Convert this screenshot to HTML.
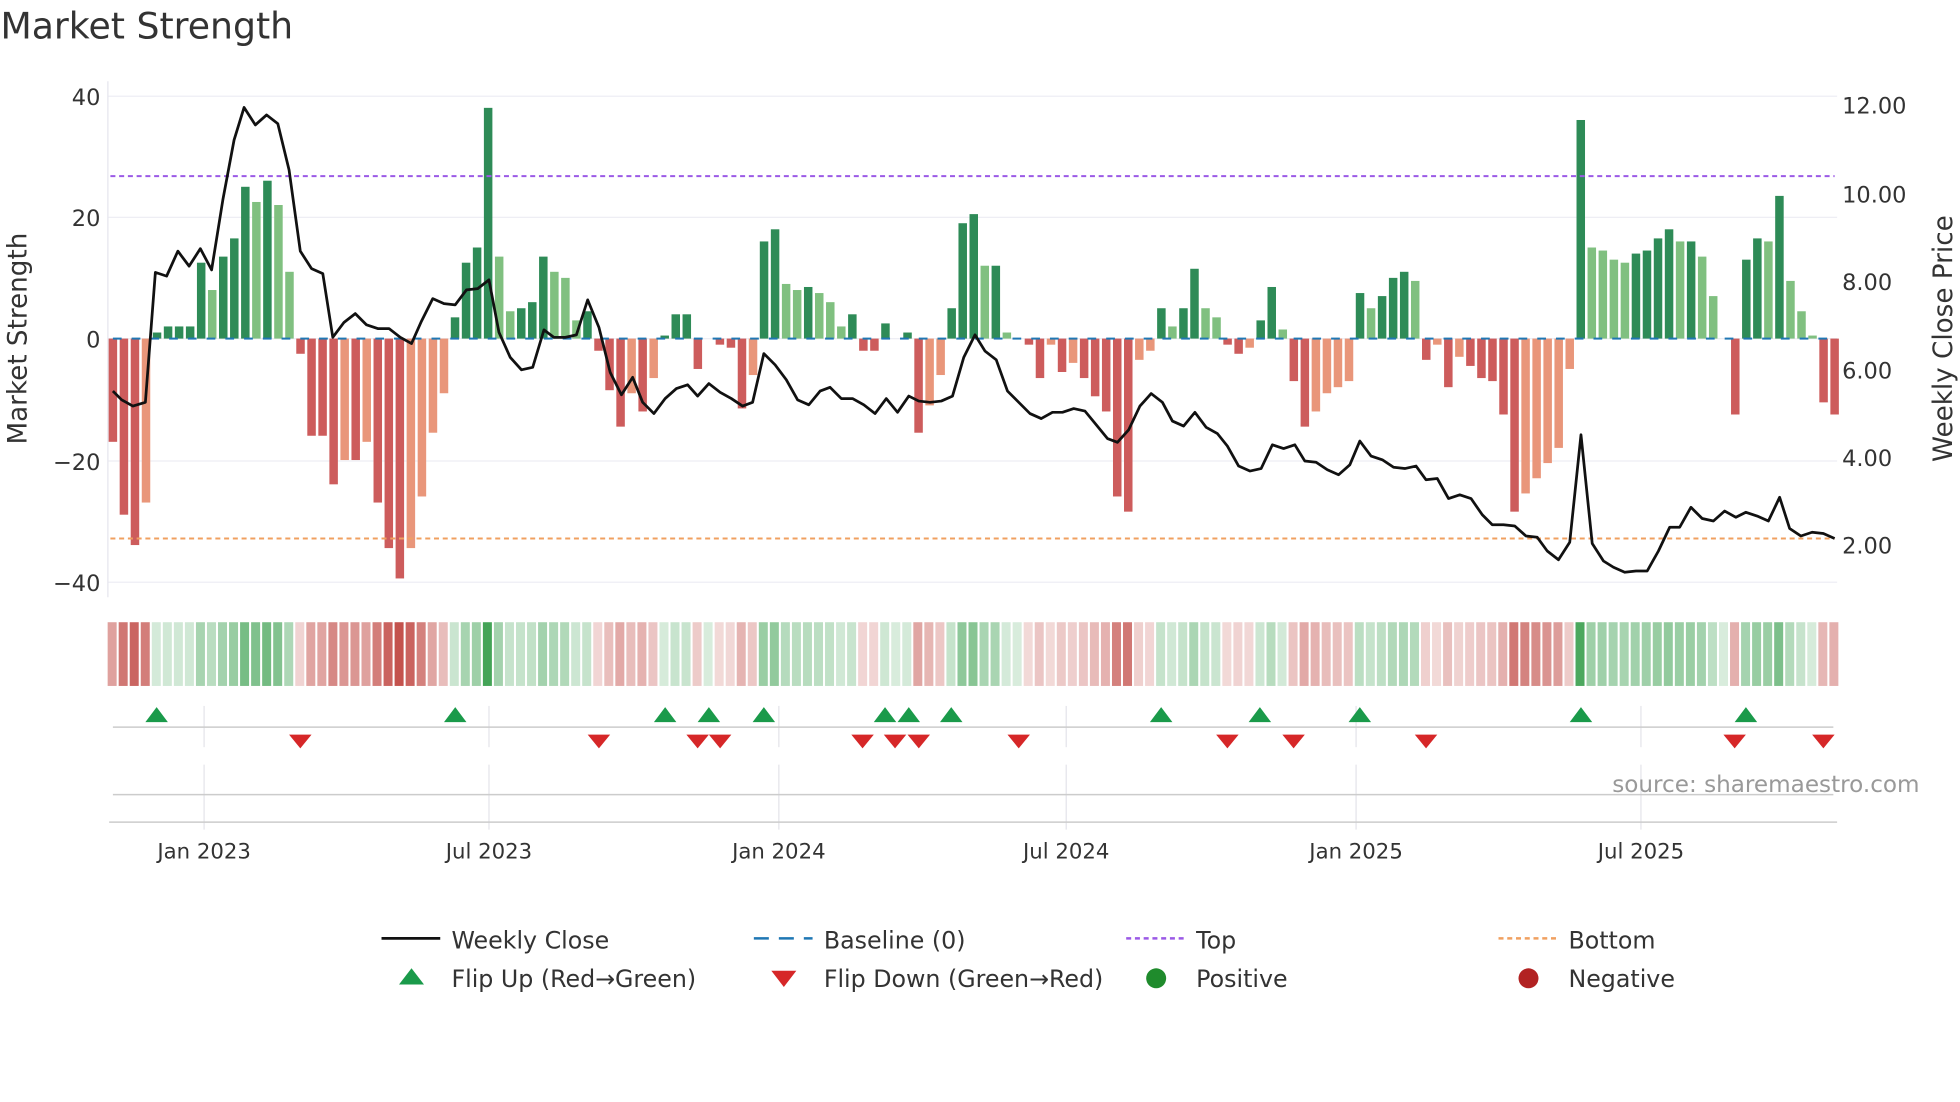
<!DOCTYPE html>
<html><head><meta charset="utf-8"><style>
html,body{margin:0;padding:0;background:#fff;width:1960px;height:1102px;overflow:hidden}
svg{display:block}
text{font-family:"DejaVu Sans","Liberation Sans",sans-serif;fill:#333}
</style></head><body>
<svg id="s" width="1960" height="1102" viewBox="0 0 1568 882" xmlns="http://www.w3.org/2000/svg">
<text x="0" y="31" font-size="29" fill="#333">Market Strength</text>
<g id="grid"></g>
<line x1="86" y1="65" x2="86" y2="478" stroke="#e6e6ee" stroke-width="1"/>
<g id="bars"></g>
<line x1="88" y1="141" x2="1468" y2="141" stroke="#9b59e6" stroke-width="1.6" stroke-dasharray="4,3"/>
<line x1="88" y1="431" x2="1468" y2="431" stroke="#f0a060" stroke-width="1.6" stroke-dasharray="4,3"/>
<g id="base"></g>
<polyline id="price" fill="none" stroke="#111" stroke-width="2.2" stroke-linejoin="round"/>
<g font-size="18" text-anchor="end">
<text x="80" y="84">40</text><text x="80" y="181">20</text><text x="80" y="278">0</text><text x="80" y="376">−20</text><text x="80" y="473">−40</text>
</g>
<g font-size="18">
<text x="1474" y="91">12.00</text><text x="1474" y="162">10.00</text><text x="1474" y="232">8.00</text><text x="1474" y="303">6.00</text><text x="1474" y="373">4.00</text><text x="1474" y="443">2.00</text>
</g>
<text transform="translate(21,271) rotate(-90)" font-size="21" text-anchor="middle">Market Strength</text>
<text transform="translate(1562,271) rotate(-90)" font-size="21" text-anchor="middle">Weekly Close Price</text>
<g id="heat"></g>
<line x1="90" y1="582" x2="1467" y2="582" stroke="#ccc" stroke-width="1.2"/>
<line x1="90" y1="636" x2="1467" y2="636" stroke="#ccc" stroke-width="1.2"/>
<line x1="87" y1="658" x2="1470" y2="658" stroke="#ccc" stroke-width="1.2"/>
<g id="marks"></g>
<g font-size="17" text-anchor="middle">
<text x="163" y="687">Jan 2023</text><text x="391" y="687">Jul 2023</text><text x="623" y="687">Jan 2024</text><text x="853" y="687">Jul 2024</text><text x="1085" y="687">Jan 2025</text><text x="1313" y="687">Jul 2025</text>
</g>
<text x="1536" y="634" font-size="18.5" text-anchor="end" style="fill:#999">source: sharemaestro.com</text>
<g font-size="19">
<line x1="305" y1="751" x2="352" y2="751" stroke="#111" stroke-width="2.2"/><text x="361" y="759">Weekly Close</text>
<line x1="603" y1="751" x2="650" y2="751" stroke="#1f77b4" stroke-width="2" stroke-dasharray="12,8"/><text x="659" y="759">Baseline (0)</text>
<line x1="901" y1="751" x2="948" y2="751" stroke="#9b59e6" stroke-width="2" stroke-dasharray="4,3"/><text x="957" y="759">Top</text>
<line x1="1199" y1="751" x2="1246" y2="751" stroke="#f0a060" stroke-width="2" stroke-dasharray="4,3"/><text x="1255" y="759">Bottom</text>
<polygon points="319,788 329,775 339,788" fill="#1a9a4a"/><text x="361" y="790">Flip Up (Red→Green)</text>
<polygon points="617,777 627,790 637,777" fill="#d62728"/><text x="659" y="790">Flip Down (Green→Red)</text>
<circle cx="925" cy="783" r="8" fill="#1f8b2c"/><text x="957" y="790">Positive</text>
<circle cx="1223" cy="783" r="8" fill="#b22222"/><text x="1255" y="790">Negative</text>
</g>
</svg>
<script>
var NS="http://www.w3.org/2000/svg";
function el(p,t,a){var e=document.createElementNS(NS,t);for(var k in a)e.setAttribute(k,a[k]);document.getElementById(p).appendChild(e);return e;}
var V=[-17,-29,-34,-27,1,2,2,2,12.5,8,13.5,16.5,25,22.5,26,22,11,-2.5,-16,-16,-24,-20,-20,-17,-27,-34.5,-39.5,-34.5,-26,-15.5,-9,3.5,12.5,15,38,13.5,4.5,5,6,13.5,11,10,3,4.5,-2,-8.5,-14.5,-9,-12,-6.5,0.5,4,4,-5,0,-1,-1.5,-11.5,-6,16,18,9,8,8.5,7.5,6,2,4,-2,-2,2.5,0,1,-15.5,-11,-6,5,19,20.5,12,12,1,0,-1,-6.5,-1,-5.5,-4,-6.5,-9.5,-12,-26,-28.5,-3.5,-2,5,2,5,11.5,5,3.5,-1,-2.5,-1.5,3,8.5,1.5,-7,-14.5,-12,-9,-8,-7,7.5,5,7,10,11,9.5,-3.5,-1,-8,-3,-4.5,-6.5,-7,-12.5,-28.5,-25.5,-23,-20.5,-18,-5,36,15,14.5,13,12.5,14,14.5,16.5,18,16,16,13.5,7,0,-12.5,13,16.5,16,23.5,9.5,4.5,0.5,-10.5,-12.5];
var n=V.length,x0=90,x1=1468,dx=(x1-x0)/(n-1);
[77,174,271,369,466].forEach(function(y){el("grid","line",{x1:86,x2:1470,y1:y,y2:y,stroke:"#eeeef4","stroke-width":1});});
[163,391,623,853,1085,1313].forEach(function(x){el("grid","line",{x1:x,x2:x,y1:565,y2:598,stroke:"#e4e4ea","stroke-width":1});el("grid","line",{x1:x,x2:x,y1:612,y2:664,stroke:"#e4e4ea","stroke-width":1});});
function mix(c,a){return "rgb("+c.map(function(v){return Math.round(255+(v-255)*a)}).join(",")+")";}
for(var i=0;i<n;i++){var v=V[i],p=i?V[i-1]:0,x=x0+i*dx,y0=271,h=v*4.86;
var c;if(v>=0)c=(v>=p)?"#2e8b57":"#80c080";else c=(v<=p)?"#cd5c5c":"#e9967a";
if(Math.abs(h)>0.3)el("bars","rect",{x:x-3.4,y:v>=0?y0-h:y0,width:6.8,height:Math.abs(h),fill:c});
var a=0.2+0.8*Math.min(Math.abs(v)/40,1);
el("heat","rect",{x:x-4.2,y:498,width:7.2,height:51,fill:v>=0?mix([60,160,80],a):mix([195,80,75],a)});
}
for(var x=90;x<1468;x+=15)el("base","line",{x1:x,x2:x+7,y1:271,y2:271,stroke:"#1f77b4","stroke-width":1.6});
var P=[[90,313],[97,320],[106,325],[116,322],[124,218],[133,221],[142,201],[151,213],[160,199],[169,216],[178,160],[187,112],[195,86],[204,100],[213,92],[222,99],[231,136],[240,201],[249,215],[258,219],[266,270],[275,258],[284,251],[293,260],[302,263],[311,263],[320,270],[329,275],[337,257],[346,239],[355,243],[364,244],[373,232],[382,231],[391,224],[399,266],[408,286],[417,296],[426,294],[435,264],[443,270],[452,270],[461,268],[470,240],[479,262],[488,298],[497,316],[506,302],[514,322],[523,331],[532,319],[541,311],[550,308],[558,317],[567,307],[576,314],[585,319],[594,325],[602,322],[611,283],[620,292],[629,304],[638,320],[647,324],[656,313],[664,310],[673,319],[682,319],[691,324],[700,331],[709,319],[718,330],[727,317],[735,321],[744,322],[753,321],[762,317],[771,286],[780,268],[788,281],[797,288],[806,313],[815,322],[824,331],[833,335],[842,330],[850,330],[859,327],[868,329],[877,340],[886,351],[894,354],[903,344],[912,325],[921,315],[930,322],[938,337],[947,341],[956,330],[965,342],[974,347],[982,357],[991,373],[1000,377],[1009,375],[1018,356],[1027,359],[1036,356],[1044,369],[1053,370],[1062,376],[1071,380],[1080,372],[1088,353],[1097,365],[1106,368],[1115,374],[1124,375],[1133,373],[1141,384],[1150,383],[1159,399],[1168,396],[1177,399],[1186,412],[1194,420],[1203,420],[1212,421],[1221,429],[1230,430],[1238,441],[1247,448],[1256,434],[1265,348],[1274,435],[1283,449],[1291,454],[1300,458],[1309,457],[1318,457],[1327,441],[1336,422],[1344,422],[1353,406],[1362,415],[1371,417],[1380,409],[1389,414],[1397,410],[1406,413],[1415,417],[1424,398],[1432,423],[1441,429],[1450,426],[1459,427],[1468,431]];
document.getElementById("price").setAttribute("points",P.map(function(q){return q.join(",")}).join(" "));
[125,364,532,567,611,708,727,761,929,1008,1088,1265,1397].forEach(function(x){el("marks","polygon",{points:(x-9)+",578 "+x+",566 "+(x+9)+",578",fill:"#1a9a4a"});});
[240,479,558,576,690,716,735,815,982,1035,1141,1388,1459].forEach(function(x){el("marks","polygon",{points:(x-9)+",588 "+x+",599 "+(x+9)+",588",fill:"#d62728"});});
</script>
</body></html>
